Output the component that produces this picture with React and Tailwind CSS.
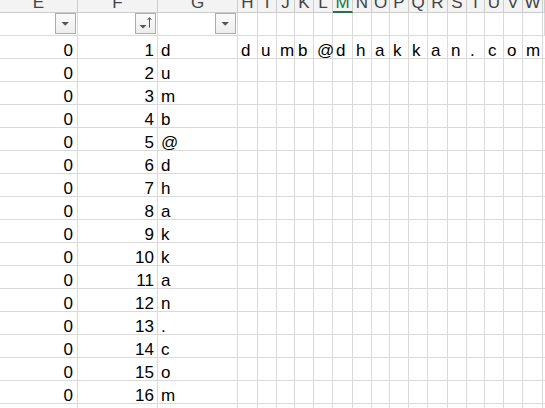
import React from "react";

const COLS = [
  { key: "E", w: "w-[78px]" },
  { key: "F", w: "w-[80px]" },
  { key: "G", w: "w-[80px]" },
  { key: "H", w: "w-[20px]" },
  { key: "I", w: "w-[19px]" },
  { key: "J", w: "w-[18px]" },
  { key: "K", w: "w-[19px]" },
  { key: "L", w: "w-[19px]" },
  { key: "M", w: "w-[20px]" },
  { key: "N", w: "w-[19px]" },
  { key: "O", w: "w-[18px]" },
  { key: "P", w: "w-[19px]" },
  { key: "Q", w: "w-[19px]" },
  { key: "R", w: "w-[20px]" },
  { key: "S", w: "w-[19px]" },
  { key: "T", w: "w-[18px]" },
  { key: "U", w: "w-[19px]" },
  { key: "V", w: "w-[19px]" },
  { key: "W", w: "w-[20px]" },
  { key: "X", w: "flex-1", hidden: true },
];

const EMAIL = "dumb@dhakkan.com".split("");

const FilterBtn = ({ sorted }) => (
  <div className="w-[21px] h-[21px] box-border border border-[#acacac] bg-gradient-to-b from-[#fbfbfb] to-[#ededed]">
    {sorted ? (
      <svg width="19" height="19" viewBox="0 0 19 19">
        <path d="M3.5 11h7l-3.5 3.5z" fill="#555" />
        <path d="M13.5 4v9.5" stroke="#555" strokeWidth="1" />
        <path d="M11.5 6l2-2.5 2 2.5" fill="none" stroke="#555" strokeWidth="1" />
      </svg>
    ) : (
      <svg width="19" height="19" viewBox="0 0 19 19">
        <path d="M5.5 8h7.5l-3.75 3.75z" fill="#555" />
      </svg>
    )}
  </div>
);

const HeaderRow = () => (
  <div className="flex h-[13px] overflow-hidden">
    {COLS.map((c) => (
      <div
        key={c.key}
        className={`${c.w} shrink-0 box-border h-[13px] border-r flex items-end justify-center overflow-hidden text-[17px] leading-[17px] ${
          c.key === "M"
            ? "border-b-2 border-[#d0d0d0] border-b-[#217346] bg-[#f3f3f3] text-[#217346]"
            : "border-b pb-[1px] border-[#cccccc] bg-[#f3f3f3] text-[#444444]"
        }`}
      >
        {c.hidden ? null : c.key}
      </div>
    ))}
  </div>
);

const FilterRow = () => (
  <div className="flex h-[23px]">
    {COLS.map((c, i) => (
      <div
        key={c.key}
        className={`${c.w} shrink-0 box-border h-[23px] border-r border-b border-[#dadada] flex justify-end items-start pr-px`}
      >
        {i < 3 && <FilterBtn sorted={i === 1} />}
      </div>
    ))}
  </div>
);

const DataRow = ({ n }) => (
  <div className="flex h-[23px]">
    {COLS.map((c, i) => {
      let content = null;
      let align = "justify-start pl-[3px]";
      if (i === 0) {
        content = n ? "0" : null;
        align = "justify-end pr-[4px]";
      } else if (i === 1) {
        content = n || null;
        align = "justify-end pr-[3px]";
      } else if (i === 2) {
        content = n ? EMAIL[n - 1] : null;
      } else if (n === 1 && i >= 3 && i < 19) {
        content = EMAIL[i - 3];
      }
      return (
        <div
          key={c.key}
          className={`${c.w} shrink-0 box-border h-[23px] border-r border-b border-[#dadada] flex items-end overflow-visible whitespace-nowrap ${align}`}
        >
          <span className="leading-[15px]">{content}</span>
        </div>
      );
    })}
  </div>
);

export default function App() {
  const rows = Array.from({ length: 16 }, (_, i) => i + 1);
  return (
    <div className="w-[545px] h-[408px] overflow-hidden bg-white text-black text-[17px] font-['Liberation_Sans',Arial,sans-serif]">
      <HeaderRow />
      <FilterRow />
      {rows.map((n) => (
        <DataRow key={n} n={n} />
      ))}
      <DataRow n={0} />
    </div>
  );
}
